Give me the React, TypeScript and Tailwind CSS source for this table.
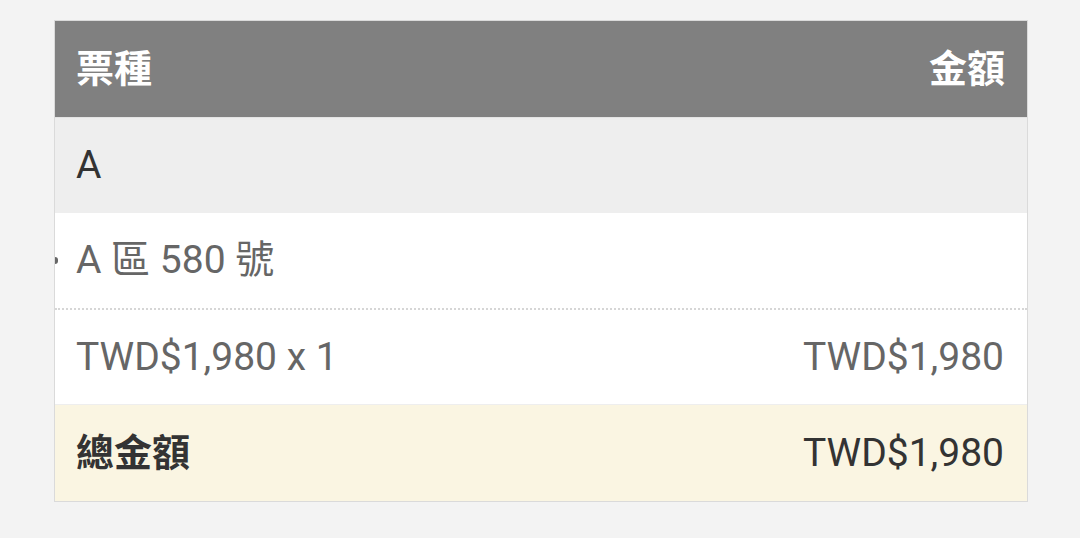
import React from "react";

const font = { fontFamily: "Roboto, 'Noto Sans CJK TC', sans-serif" };

type Line = { label: string; amount: string };

const lines: Line[] = [{ label: "TWD$1,980 x 1", amount: "TWD$1,980" }];

export default function App() {
  return (
    <div className="min-h-[538px] bg-[#f3f3f3] pt-[20px]" style={font}>
      <div className="ml-[54px] w-[974px] border border-[#dadada] bg-white">
        {/* 表頭 */}
        <div className="flex h-[97px] items-center justify-between border-b border-[#e3e3e3] bg-[#808080] pl-[21px] pr-[22px] text-[38px] font-bold text-white">
          <span>票種</span>
          <span>金額</span>
        </div>

        {/* 區域 */}
        <div className="flex h-[95px] items-center bg-[#eeeeee] pl-[21px] pr-[22px] text-[39px] text-[#333333]">
          A
        </div>

        {/* 座位 */}
        <div className="relative flex h-[97px] items-center border-b-2 border-dotted border-[#d6d6d6] pl-[21px] pr-[22px] text-[39px] text-[#666666]">
          <span className="absolute left-0 top-[44px] h-[7px] w-[3px] rounded-r-full bg-[#666666]" />
          A 區 580 號
        </div>

        {lines.map((l) => (
          <div
            key={l.label}
            className="flex h-[95px] items-center justify-between border-b border-[#eeeeee] pl-[21px] pr-[23px] text-[39px] text-[#666666]"
          >
            <span>{l.label}</span>
            <span>{l.amount}</span>
          </div>
        ))}

        {/* 總金額 */}
        <div className="flex h-[96px] items-center justify-between bg-[#faf5e2] pl-[21px] pr-[23px] text-[39px] text-[#333333]">
          <span className="text-[38px] font-bold">總金額</span>
          <span>TWD$1,980</span>
        </div>
      </div>
    </div>
  );
}
